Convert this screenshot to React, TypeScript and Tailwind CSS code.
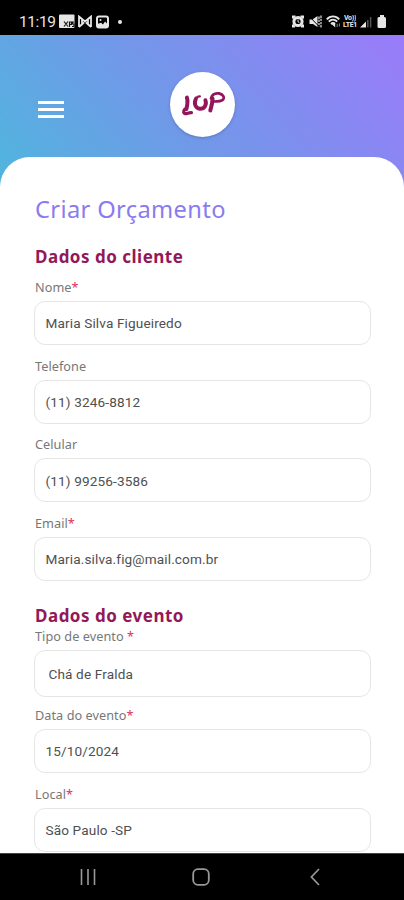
import React from 'react';

type FieldProps = {
  label: string;
  value: string;
  required?: boolean;
  className?: string;
  boxClassName?: string;
};

const LupLogo = () => (
  <svg width="44" height="30" viewBox="0 0 44 30" fill="none" stroke="#94165a" strokeLinecap="round" strokeLinejoin="round">
    <path d="M5.9 7.6 C7 11 6.4 15 5.4 19" strokeWidth="4" />
    <path d="M5.4 18.5 C2.8 19 2 22 3.6 23.4 C5.6 24.6 7 22.4 10.4 22.6" strokeWidth="3.3" />
    <path d="M15 8.6 C12.4 13.5 14.6 18.4 18.8 18.8 C23.4 19 26 15 24.4 10.2" strokeWidth="3.9" />
    <path d="M15.4 8.2 C16.2 6.8 17.4 6.2 18.8 6.3" strokeWidth="2.3" />
    <path d="M31.5 8.5 C31.7 12.5 30.4 16 29.3 20.4" strokeWidth="4" />
    <path d="M30 8.4 C31 4.4 34.4 2.9 38 3.4 C42.6 4.6 43.6 7.6 42 9.6 C39.8 11.4 36 11.6 32 11.5" strokeWidth="2.7" />
  </svg>
);

const StatusBar = () => (
  <div className="h-[35px] shrink-0 bg-black flex items-center justify-between pl-[19px] pr-[17px] pt-[8px] text-[#e6e6e6]">
    <div className="flex items-center">
      <span className="font-['Roboto','Noto_Sans',sans-serif] text-[15.5px] leading-[16px] w-[40px] tracking-[-0.4px]">11:19</span>
      <svg width="16" height="15" viewBox="0 0 16 15" fill="currentColor">
        <rect x="0" y="0.5" width="15.5" height="13.5" rx="1" />
        <path d="M5 7.5l4 5M9 7.5l-4 5M10.5 13v-5h2v2.5h-2M15 8h-1.5v2H15v2.5h-2" stroke="#111" strokeWidth="1.2" fill="none" />
      </svg>
      <svg className="ml-[3px]" width="14" height="13" viewBox="0 0 14 13" fill="none" stroke="currentColor" strokeWidth="1.8">
        <path d="M1 12V1.5l6 5 6-5V12M1 12l5-4.5M13 12L8 7.5M4 4v5M10 4v5" />
      </svg>
      <svg className="ml-[4px]" width="13" height="14" viewBox="0 0 13 14" fill="none">
        <rect x="1" y="1.5" width="11" height="11" rx="2" stroke="currentColor" strokeWidth="2" />
        <path d="M2 12V8.8l3-1 2 1.8 2-3 2.5 2.4V12z" fill="currentColor" />
        <circle cx="4.5" cy="5" r="1" fill="currentColor" />
      </svg>
      <span className="ml-[9px] size-[4px] rounded-full bg-[#e6e6e6]" />
    </div>
    <div className="flex items-center">
      {/* alarm */}
      <svg width="12" height="13" viewBox="0 0 12 13" fill="none" stroke="currentColor">
        <circle cx="6" cy="6.5" r="4.1" strokeWidth="3" />
        <path d="M1 3.5V1.5h2.5M8.5 1.5H11v2M1 9.5v2h2M11 9.5v2H9" strokeWidth="2" />
        <path d="M6 4.5v2.3l1.4.8" strokeWidth="1" />
      </svg>
      {/* muted speaker */}
      <svg className="ml-[5px]" width="13" height="13" viewBox="0 0 13 13" fill="currentColor">
        <path d="M0.5 4.5h3L8.5 1v11L4 8.9H0.5z" />
        <path d="M10 1.5v10M12 .5v12" stroke="currentColor" strokeWidth="1.2" fill="none" strokeDasharray="2.4 .8" />
        <path d="M.5 1.5l10 10.5" stroke="#000" strokeWidth="1" />
      </svg>
      {/* wifi */}
      <svg className="ml-[4px]" width="15" height="13" viewBox="0 0 15 13" fill="none" stroke="currentColor" strokeWidth="1.9">
        <path d="M.8 4.3C4.3.4 9.7.4 13.2 4.3M2.8 6.7c2.6-2.8 5.8-2.8 8.4 0M5 9c1.4-1.3 2.8-1.3 4 0" />
        <path d="M5.5 9h3.7v3.5z" fill="currentColor" stroke="none" />
        <path d="M11.2 12V8.8M13.4 8.5v3" strokeWidth="1" stroke="#888" />
      </svg>
      <div className="ml-[1px] w-[16px] flex flex-col items-center font-['Roboto','Noto_Sans',sans-serif] font-bold text-[7px] leading-[7px] tracking-[-0.3px]">
        <span className="h-[7px] overflow-hidden">Vo))</span>
        <span className="h-[7px] overflow-hidden">LTE1</span>
      </div>
      {/* signal */}
      <svg className="ml-[2px]" width="12" height="12" viewBox="0 0 12 12">
        <path d="M0 11.5L6 5.5v6z" fill="currentColor" />
        <path d="M7.8 4v7.5M10.6 1v10.5" stroke="#555" strokeWidth="1.5" />
      </svg>
      {/* battery */}
      <svg className="ml-[5px]" width="10" height="13" viewBox="0 0 10 13" fill="currentColor">
        <rect x="3" y="0" width="4" height="3" />
        <rect x="0.5" y="2" width="8.5" height="11" rx="1.5" />
      </svg>
    </div>
  </div>
);

const Field: React.FC<FieldProps> = ({ label, value, required, className = 'mb-[14.4px]', boxClassName = 'h-[44.2px] pl-[10.5px]' }) => (
  <div className={className}>
    <div className="h-[14px] mb-[6px] pl-px text-[12.7px] leading-[12px] text-[#777] tracking-[0.05px] whitespace-pre">
      {label}
      {required && <span className="text-[#e0305a]">*</span>}
    </div>
    <div className={`flex items-center rounded-[11px] border-[1.5px] border-[#e6e6e6] bg-white pt-[1px] font-['Roboto','Noto_Sans',sans-serif] text-[13.6px] text-[#505050] tracking-[0.13px] ${boxClassName}`}>
      {value}
    </div>
  </div>
);

const NavBar = () => (
  <div className="h-[47px] shrink-0 bg-black border-t border-[#444] flex items-center text-[#999]">
    <div className="w-[176px] flex justify-center">
      <svg width="16" height="16" viewBox="0 0 16 16" stroke="currentColor" strokeWidth="1.6">
        <path d="M1.5 0v16M8 0v16M14.5 0v16" />
      </svg>
    </div>
    <div className="w-[50px] flex justify-center">
      <svg width="18" height="18" viewBox="0 0 18 18" fill="none" stroke="currentColor" strokeWidth="1.8">
        <rect x="1.2" y="1.2" width="15.6" height="15.6" rx="4.8" />
      </svg>
    </div>
    <div className="w-[178px] flex justify-center">
      <svg width="10" height="18" viewBox="0 0 10 18" fill="none" stroke="currentColor" strokeWidth="1.7">
        <path d="M9 1L1.4 9 9 17" />
      </svg>
    </div>
  </div>
);

export default function App() {
  return (
    <div className="w-[404px] h-[900px] flex flex-col overflow-hidden bg-white font-['Noto_Sans','Open_Sans',sans-serif]">
      <StatusBar />
      <div className="flex-1 min-h-0 overflow-hidden flex flex-col bg-[linear-gradient(49deg,#52b4de_20px,#7099e8_180px,#9a7bfa_410px)] bg-[length:404px_162px] bg-no-repeat">
        <header className="h-[122px] shrink-0 grid grid-cols-3 items-center">
          <button className="ml-[38px] mt-[26px] w-[26px] flex flex-col gap-[4px]" aria-label="Menu">
            <span className="h-[3px] w-full bg-white" />
            <span className="h-[3px] w-full bg-white" />
            <span className="h-[3px] w-full bg-white" />
          </button>
          <div className="justify-self-center ml-[2px] mt-[17px] size-[65px] rounded-full bg-white shadow-[0_1px_3px_rgba(50,60,120,0.35)] flex items-center justify-center">
            <LupLogo />
          </div>
        </header>
        <main className="flex-1 min-h-0 overflow-hidden bg-white rounded-t-[30px] pl-[34px] pr-[33px]">
          <h1 className="mt-[35px] h-[34px] text-[23.7px] leading-[34px] tracking-[0.35px] text-[#8b7bf0] pl-px">Criar Orçamento</h1>
          <h2 className="mt-[19px] h-[24px] mb-[12px] text-[17px] leading-[24px] font-bold tracking-[0.5px] text-[#92185a] pl-px">Dados do cliente</h2>
          <Field label="Nome" value="Maria Silva Figueiredo" required />
          <Field label="Telefone" value="(11) 3246-8812" />
          <Field label="Celular" value="(11) 99256-3586" />
          <Field label="Email" value="Maria.silva.fig@mail.com.br" required className="mb-[23px]" />
          <h2 className="h-[24px] mb-[2px] text-[17px] leading-[24px] font-bold tracking-[0.5px] text-[#92185a] pl-px">Dados do evento</h2>
          <Field label="Tipo de evento " value="Chá de Fralda" required boxClassName="h-[47px] pl-[13.5px]" className="mb-[12px]" />
          <Field label="Data do evento" value="15/10/2024" required />
          <Field label="Local" value="São Paulo -SP" required />
        </main>
      </div>
      <NavBar />
    </div>
  );
}
